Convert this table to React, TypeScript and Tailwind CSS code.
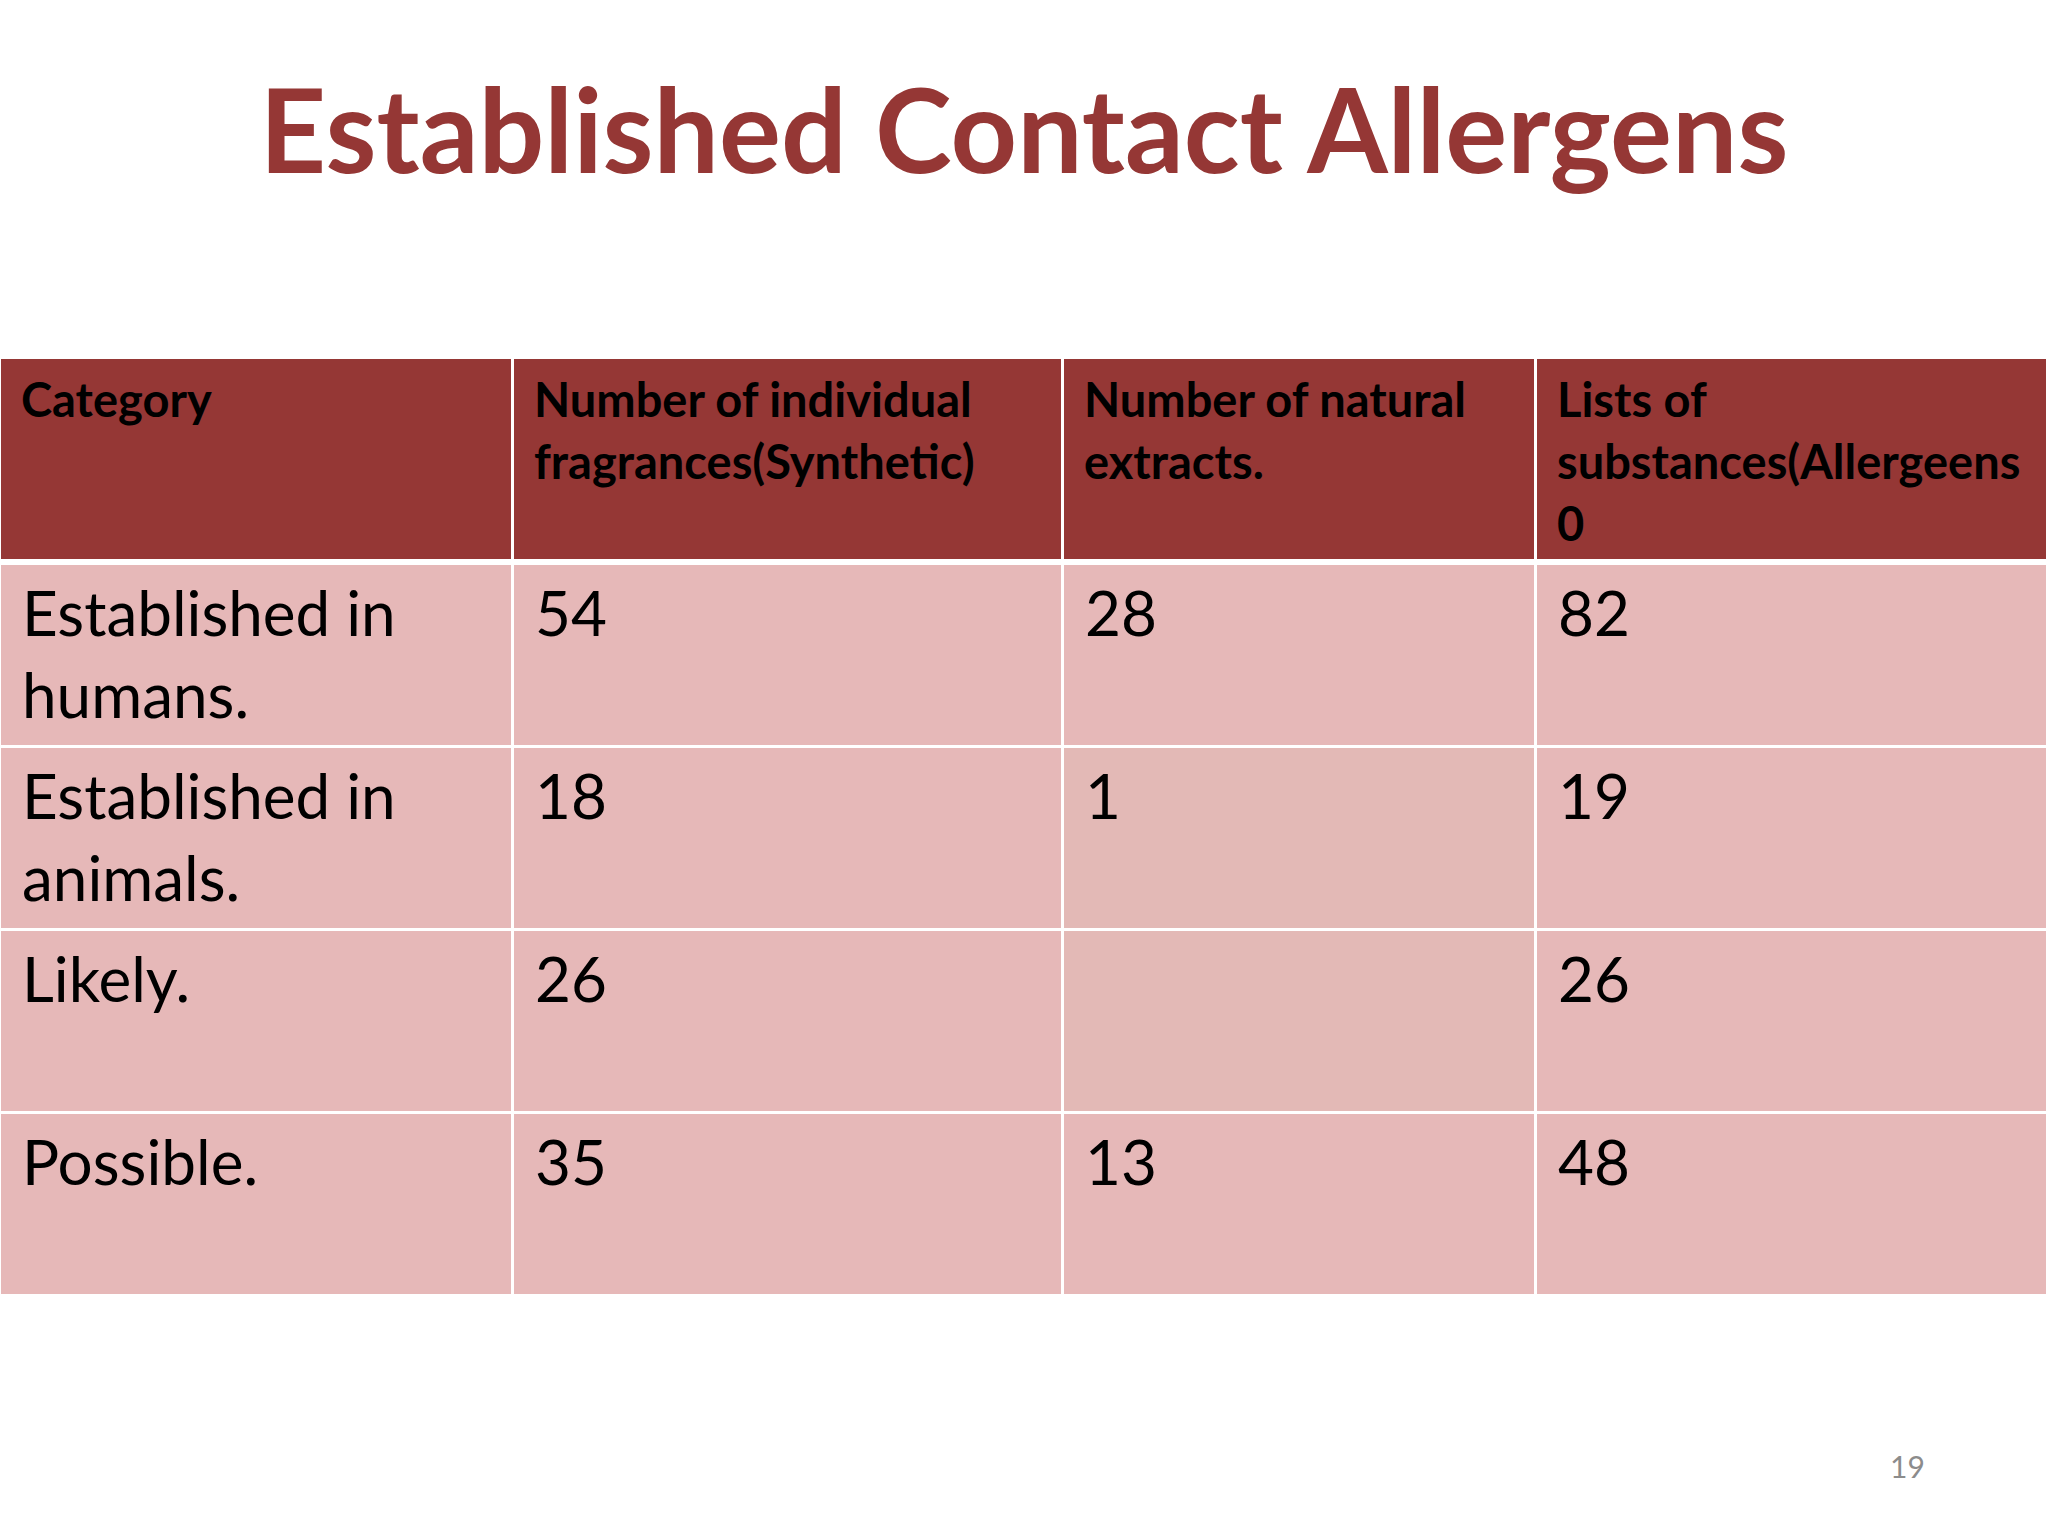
const header = [
  "Category",
  "Number of individual fragrances(Synthetic)",
  "Number of natural extracts.",
  "Lists of substances(Allergeens 0",
];

const rows: string[][] = [
  ["Established in humans.", "54", "28", "82"],
  ["Established in animals.", "18", "1", "19"],
  ["Likely.", "26", "", "26"],
  ["Possible.", "35", "13", "48"],
];

const cols = "grid grid-cols-[510px_547px_470px_1fr] gap-x-[3px]";

export default function App() {
  return (
    <div className="relative w-[2048px] h-[1536px] bg-white overflow-hidden font-['Lato','Open_Sans',sans-serif]">
      <h1 className="pt-[71px] text-center text-[116px] leading-none font-bold text-[#953735]">
        Established Contact Allergens
      </h1>

      <div className="mt-[172px] ml-[1px] w-[2045px] flex flex-col bg-white">
        <div className={`${cols} h-[200px]`}>
          {header.map((h) => (
            <div
              key={h}
              className="bg-[#953735] pl-[20px] pr-[8px] pt-[9px] text-[47px] leading-[62px] font-bold text-black whitespace-nowrap"
            >
              {h === "Number of individual fragrances(Synthetic)" ? (
                <>
                  Number of individual
                  <br />
                  fragrances(Synthetic)
                </>
              ) : h === "Lists of substances(Allergeens 0" ? (
                <>
                  Lists of
                  <br />
                  substances(Allergeens
                  <br />0
                </>
              ) : h === "Number of natural extracts." ? (
                <>
                  Number of natural
                  <br />
                  extracts.
                </>
              ) : (
                h
              )}
            </div>
          ))}
        </div>

        <div className="flex flex-col gap-y-[3px] mt-[6px]">
          {rows.map((r, i) => (
            <div key={i} className={`${cols} h-[180px]`}>
              {r.map((c, j) => (
                <div
                  key={j}
                  className={`${
                    j === 2 && (i === 1 || i === 2) ? "bg-[#e3b9b6]" : "bg-[#e6b8b8]"
                  } pl-[21px] pr-[20px] pt-[6px] text-[62px] leading-[82px] text-black`}
                >
                  {c}
                </div>
              ))}
            </div>
          ))}
        </div>
      </div>

      <div className="absolute left-[1890px] top-[1448px] text-[30px] leading-[36px] text-[#8c8c8c]">
        19
      </div>
    </div>
  );
}
